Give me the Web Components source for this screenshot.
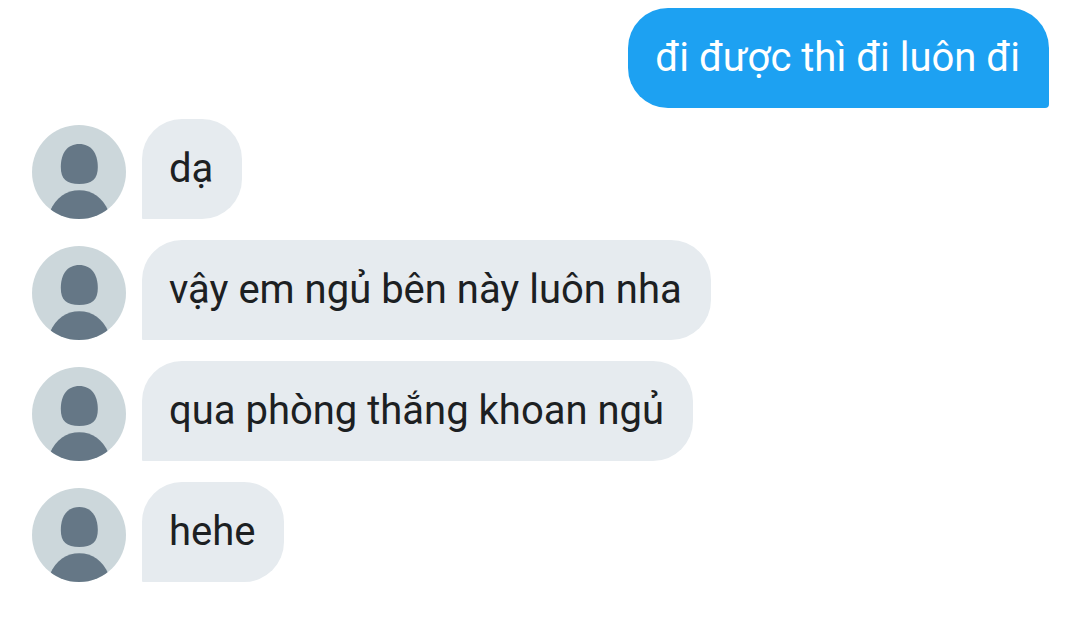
<!DOCTYPE html>
<html lang="vi">
<head>
<meta charset="utf-8">
<meta name="viewport" content="width=device-width, initial-scale=1">
<title>Tin nhắn</title>
<style>
body { margin: 0; background: #fff; font-family: Roboto, "Noto Sans", sans-serif; }
</style>
</head>
<body>
<chat-thread>
  <chat-message sent>đi được thì đi luôn đi</chat-message>
  <chat-message>dạ</chat-message>
  <chat-message>vậy em ngủ bên này luôn nha</chat-message>
  <chat-message>qua phòng thắng khoan ngủ</chat-message>
  <chat-message>hehe</chat-message>
</chat-thread>
<script>
class UserAvatar extends HTMLElement {
  constructor() {
    super();
    this.attachShadow({ mode: "open" }).innerHTML = `
      <style>
        :host { display: block; width: 94px; height: 94px; flex: none; border-radius: 50%; overflow: hidden; background: #ccd7db; }
        svg { display: block; width: 100%; height: 100%; }
      </style>
      <svg viewBox="0 0 94 94" aria-hidden="true" fill="#657786">
        <path d="M47.3 19C59 19 65.8 28 65.8 42C65.8 54 60 59 47.3 59C34.500 59 28.800 54 28.800 42C28.800 28 35.500 19 47.300 19Z"/>
        <path d="M18 86C24 72.500 34.500 65.300 47.300 65.300S70.500 72.500 76.500 86V94H18Z"/>
      </svg>`;
  }
}
class ChatMessage extends HTMLElement {
  constructor() {
    super();
    this.attachShadow({ mode: "open" }).innerHTML = `
      <style>
        :host { display: flex; align-items: flex-end; gap: 16px; }
        :host([sent]) { justify-content: flex-end; }
        :host([sent]) user-avatar { display: none; }
        p { margin: 0; padding: 26px 29px 26px 27px; font-size: 40px; line-height: 48px; color: #1c2022; background: #e6ebef; border-radius: 40px 40px 40px 1px; }
        :host([sent]) p { color: #fff; background: #1da1f2; border-radius: 40px 40px 4px 40px; }
      </style>
      <user-avatar></user-avatar>
      <p><slot></slot></p>`;
  }
}
class ChatThread extends HTMLElement {
  constructor() {
    super();
    this.attachShadow({ mode: "open" }).innerHTML = `
      <style>
        :host { display: flex; flex-direction: column; gap: 21px; padding: 8px 31px 36px 32px; }
        ::slotted([sent]) { margin-bottom: -10px; }
      </style>
      <slot></slot>`;
  }
}
customElements.define("user-avatar", UserAvatar);
customElements.define("chat-message", ChatMessage);
customElements.define("chat-thread", ChatThread);
</script>
</body>
</html>
